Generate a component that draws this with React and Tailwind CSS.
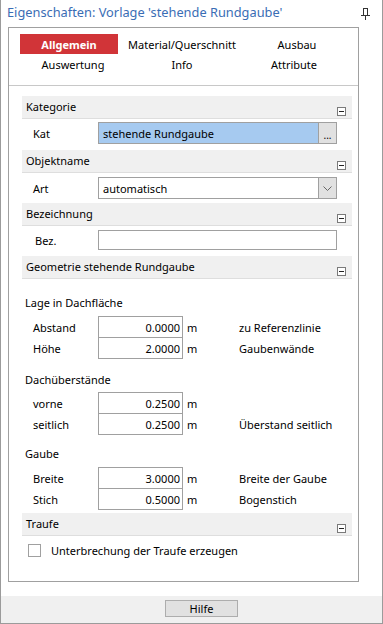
import React from "react";

function MinusBox() {
  return (
    <div className="w-[9px] h-[9px] border border-[#7a7a7a] bg-white flex items-center justify-center mb-[2px]">
      <div className="w-[5px] h-px bg-[#222]" />
    </div>
  );
}

function Header({ title, className = "" }) {
  return (
    <div className={"h-[23px] bg-[#f0f0f0] border-b border-[#dedede] flex items-end justify-between pl-[4px] pr-[6px] " + className}>
      <span className="self-center -mt-[2px]">{title}</span>
      <MinusBox />
    </div>
  );
}

function NumRow({ label, value, desc, first }) {
  return (
    <div className={"flex items-center " + (first ? "" : "-mt-px")}>
      <div className="w-[76px] pl-[11px]">{label}</div>
      <div className="w-[85px] h-[22px] border border-[#a0a0a0] bg-white flex items-center justify-end pr-[2px]">{value}</div>
      <div className="w-[56px] pl-[4px]">m</div>
      <div>{desc}</div>
    </div>
  );
}

export default function App() {
  return (
    <div className="w-[383px] h-[624px] bg-white border-l border-r border-b border-[#9b9b9b] flex flex-col font-['Noto_Sans',sans-serif] text-[11px] text-black leading-none">
      {/* title */}
      <div className="h-[27px] flex items-start justify-between pl-[6px] pr-[12px] pt-[6px]">
        <span className="text-[12.8px] text-[#3a6db5]">Eigenschaften: Vorlage 'stehende Rundgaube'</span>
        <svg width="9" height="13" viewBox="0 0 9 13" className="mt-[2px]">
          <rect x="2.5" y="0.5" width="4" height="7" fill="none" stroke="#333" />
          <rect x="0" y="7" width="9" height="1" fill="#333" />
          <rect x="4" y="8" width="1" height="4" fill="#333" />
        </svg>
      </div>

      {/* panel */}
      <div className="ml-[7px] mr-[23px] h-[555px] border border-[#a0a0a0] flex flex-col">
        <div className="h-[57px] pt-[6px] pl-[7px] grid grid-cols-[110px_112px_112px] grid-rows-[20px_20px]">
          <div className="flex items-center">
            <div className="ml-[4px] w-[98px] h-[20px] bg-[#d13438] text-white font-bold flex items-center justify-center">Allgemein</div>
          </div>
          <div className="flex items-center justify-center">Material/Querschnitt</div>
          <div className="flex items-center justify-center pl-[6px]">Ausbau</div>
          <div className="flex items-center justify-center pl-[4px]">Auswertung</div>
          <div className="flex items-center justify-center">Info</div>
          <div className="flex items-center justify-center">Attribute</div>
        </div>
        <div className="border-t border-[#c8c8c8]" />

        <div className="pl-[13px] pr-[6px] pt-[10px] flex flex-col">
          <Header title="Kategorie" />
          <div className="flex items-center mt-[3px]">
            <div className="w-[76px] pl-[11px]">Kat</div>
            <div className="w-[221px] h-[22px] border border-[#a0a0a0] bg-[#a6caf0] flex items-center pl-[4px]">stehende Rundgaube</div>
            <div className="w-[19px] h-[22px] -ml-px border border-[#a0a0a0] bg-[#e1e1e1] flex items-center justify-center text-[10px] pt-[3px]">...</div>
          </div>

          <Header title="Objektname" className="mt-[6px]" />
          <div className="flex items-center mt-[4px]">
            <div className="w-[76px] pl-[11px]">Art</div>
            <div className="w-[221px] h-[22px] border border-[#a0a0a0] bg-white flex items-center pl-[4px]">automatisch</div>
            <div className="w-[19px] h-[22px] -ml-px border border-[#a0a0a0] bg-[#e1e1e1] flex items-center justify-center">
              <svg width="9" height="5" viewBox="0 0 9 5"><path d="M0.5 0.5 L4.5 4.5 L8.5 0.5" fill="none" stroke="#666" /></svg>
            </div>
          </div>

          <Header title="Bezeichnung" className="mt-[4px]" />
          <div className="flex items-center mt-[4px]">
            <div className="w-[76px] pl-[13px]">Bez.</div>
            <div className="w-[239px] h-[20px] border border-[#a0a0a0] bg-white" />
          </div>

          <Header title="Geometrie stehende Rundgaube" className="mt-[6px]" />
          <div className="pl-[3px] mt-[15px] h-[16px] flex items-center">Lage in Dachfläche</div>
          <div className="mt-[6px]">
            <NumRow first label="Abstand" value="0.0000" desc="zu Referenzlinie" />
            <NumRow label="Höhe" value="2.0000" desc="Gaubenwände" />
          </div>
          <div className="pl-[3px] mt-[12px] h-[16px] flex items-center">Dachüberstände</div>
          <div className="mt-[5px]">
            <NumRow first label="vorne" value="0.2500" desc="" />
            <NumRow label="seitlich" value="0.2500" desc="Überstand seitlich" />
          </div>
          <div className="pl-[3px] mt-[10px] h-[16px] flex items-center">Gaube</div>
          <div className="mt-[6px]">
            <NumRow first label="Breite" value="3.0000" desc="Breite der Gaube" />
            <NumRow label="Stich" value="0.5000" desc="Bogenstich" />
          </div>

          <Header title="Traufe" className="mt-[3px]" />
          <div className="flex items-center mt-[8px] pl-[6px]">
            <div className="w-[13px] h-[13px] border border-[#a0a0a0] bg-white" />
            <span className="ml-[10px]">Unterbrechung der Traufe erzeugen</span>
          </div>
        </div>
      </div>

      <div className="h-[14px]" />
      <div className="flex-1 bg-[#f0f0f0] flex justify-center pt-[4px]">
        <div className="ml-[20px] w-[73px] h-[17px] border border-[#adadad] bg-[#e1e1e1] flex items-center justify-center text-[11px]">Hilfe</div>
      </div>
    </div>
  );
}
